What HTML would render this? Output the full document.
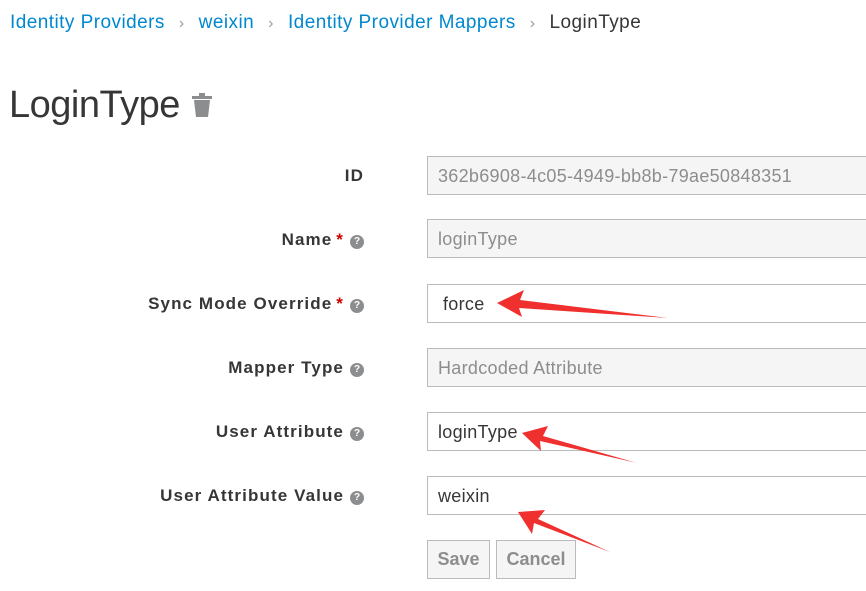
<!DOCTYPE html>
<html><head><meta charset="utf-8"><style>
body{margin:0;width:866px;height:591px;background:#fff;font-family:"Liberation Sans",sans-serif;position:relative;overflow:hidden}
.bc{position:absolute;top:12px;left:10px;font-size:19px;color:#0088ce;white-space:nowrap;letter-spacing:0.45px}
.bc .s{color:#9c9c9c;margin:0 14px;font-size:16px}
.bc .c{color:#363636}
h1{position:absolute;top:84px;left:9px;margin:0;font-weight:300;font-size:38px;color:#363636;letter-spacing:-0.5px}
.lbl{position:absolute;right:502px;font-size:17px;font-weight:bold;color:#363636;white-space:nowrap;text-align:right;letter-spacing:1.1px}
.lbl .r{color:#c00;margin-left:4px}
.q{display:inline-block;width:14px;height:14px;border-radius:50%;background:#8b8d8f;color:#fff;font-size:10px;line-height:14px;text-align:center;margin-left:6px;vertical-align:1px;font-weight:bold;letter-spacing:0}
.in{position:absolute;left:427px;width:450px;height:39px;border:1px solid #bbb;box-sizing:border-box;font-size:18px;padding:0 10px;line-height:38px;color:#363636;letter-spacing:0.3px}
.ro{background:#f5f5f5;color:#8b8d8f}
.btn{position:absolute;top:540px;height:39px;border:1px solid #bbb;background:#f5f5f5;color:#8b8d8f;font-size:18px;font-weight:bold;line-height:37px;text-align:center;box-sizing:border-box}
</style></head><body>
<div class="bc">Identity Providers<span class="s">&#8250;</span>weixin<span class="s">&#8250;</span>Identity Provider Mappers<span class="s">&#8250;</span><span class="c">LoginType</span></div>
<h1>LoginType <svg width="24" height="28" viewBox="0 0 24 28" style="vertical-align:-2px"><rect x="9" y="2" width="6" height="3" fill="#8b8d8f"/><rect x="2" y="5" width="20" height="3" fill="#8b8d8f"/><path d="M4 9h16l-2 17H6z" fill="#8b8d8f"/></svg></h1>

<div class="lbl" style="top:166px">ID</div>
<div class="in ro" style="top:156px">362b6908-4c05-4949-bb8b-79ae50848351</div>
<div class="lbl" style="top:230px">Name<span class="r">*</span><span class="q">?</span></div>
<div class="in ro" style="top:219px">loginType</div>
<div class="lbl" style="top:294px">Sync Mode Override<span class="r">*</span><span class="q">?</span></div>
<div class="in" style="top:284px;padding-left:15px">force</div>
<div class="lbl" style="top:358px">Mapper Type<span class="q">?</span></div>
<div class="in ro" style="top:348px">Hardcoded Attribute</div>
<div class="lbl" style="top:422px">User Attribute<span class="q">?</span></div>
<div class="in" style="top:412px">loginType</div>
<div class="lbl" style="top:486px">User Attribute Value<span class="q">?</span></div>
<div class="in" style="top:476px">weixin</div>
<div class="btn" style="left:427px;width:63px">Save</div>
<div class="btn" style="left:496px;width:80px">Cancel</div>

<svg width="866" height="591" style="position:absolute;left:0;top:0">
<g fill="#f0302e">
<polygon points="497,303 524,290 520,300 668,318 519,308 522,317"/>
<polygon points="522,433 548,426 543,436 637,463 540,441 541,451"/>
<polygon points="518,512 545,510 538,519 610,552 534,523 532,534"/>
</g></svg>
</body></html>
